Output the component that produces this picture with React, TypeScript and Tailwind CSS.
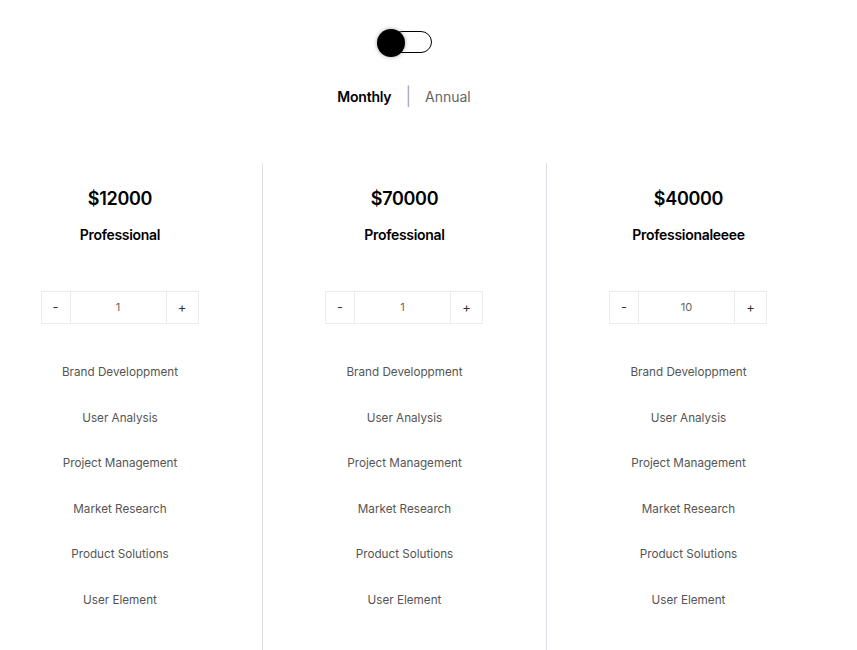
import React from "react";

const features = [
  "Brand Developpment",
  "User Analysis",
  "Project Management",
  "Market Research",
  "Product Solutions",
  "User Element",
];

const plans = [
  { price: "$12000", name: "Professional", qty: "1" },
  { price: "$70000", name: "Professional", qty: "1" },
  { price: "$40000", name: "Professionaleeee", qty: "10" },
];

export default function App() {
  return (
    <div
      className="w-[857px] h-[650px] overflow-hidden bg-white"
      style={{ fontFamily: "Inter, 'Noto Sans', sans-serif" }}
    >
      <div className="flex justify-center pt-[29px]">
        <div className="relative w-[55px] h-[28px] ml-[-48px]">
          <div className="absolute left-[14px] top-[2px] w-[41px] h-[22px] rounded-full border border-black bg-white" />
          <div className="absolute left-0 top-0 w-[28px] h-[28px] rounded-full bg-black shadow-[0_0_4px_rgba(0,0,0,0.35)]" />
        </div>
      </div>
      <div className="flex justify-center items-center mt-[30px] text-[14px] leading-[20px] ml-[-49px]">
        <span className="font-semibold text-black tracking-[-0.2px]">Monthly</span>
        <span className="text-[#999] mx-[14px] text-[18px] leading-[20px] font-light">|</span>
        <span className="text-[#666]">Annual</span>
      </div>
      <div className="flex ml-[-22px] mt-[56px]">
        {plans.map((p, i) => (
          <div
            key={i}
            className={`w-[284px] h-[500px] flex flex-col items-center ${i > 0 ? "border-l border-[#e0e0e8]" : ""}`}
          >
            <div className="mt-[24px] text-[18px] leading-[24px] font-semibold text-black tracking-[-0.3px]">
              {p.price}
            </div>
            <div className="mt-[14px] text-[14px] leading-[20px] font-semibold text-black tracking-[-0.3px]">
              {p.name}
            </div>
            <div className="mt-[46px] flex h-[33px] border border-[#ebebeb] text-[13px] text-[#333] ml-[-1px]">
              <div className="w-[29px] flex items-center justify-center border-r border-[#ebebeb]">-</div>
              <div className="w-[96px] flex items-center justify-center border-r border-[#ebebeb] text-[11px] text-[#666]">
                {p.qty}
              </div>
              <div className="w-[31px] flex items-center justify-center">+</div>
            </div>
            <div className="mt-[26px] flex flex-col items-center">
              {features.map((f) => (
                <div key={f} className="h-[45.6px] flex items-center text-[11.7px] text-[#555]">
                  {f}
                </div>
              ))}
            </div>
          </div>
        ))}
      </div>
    </div>
  );
}
